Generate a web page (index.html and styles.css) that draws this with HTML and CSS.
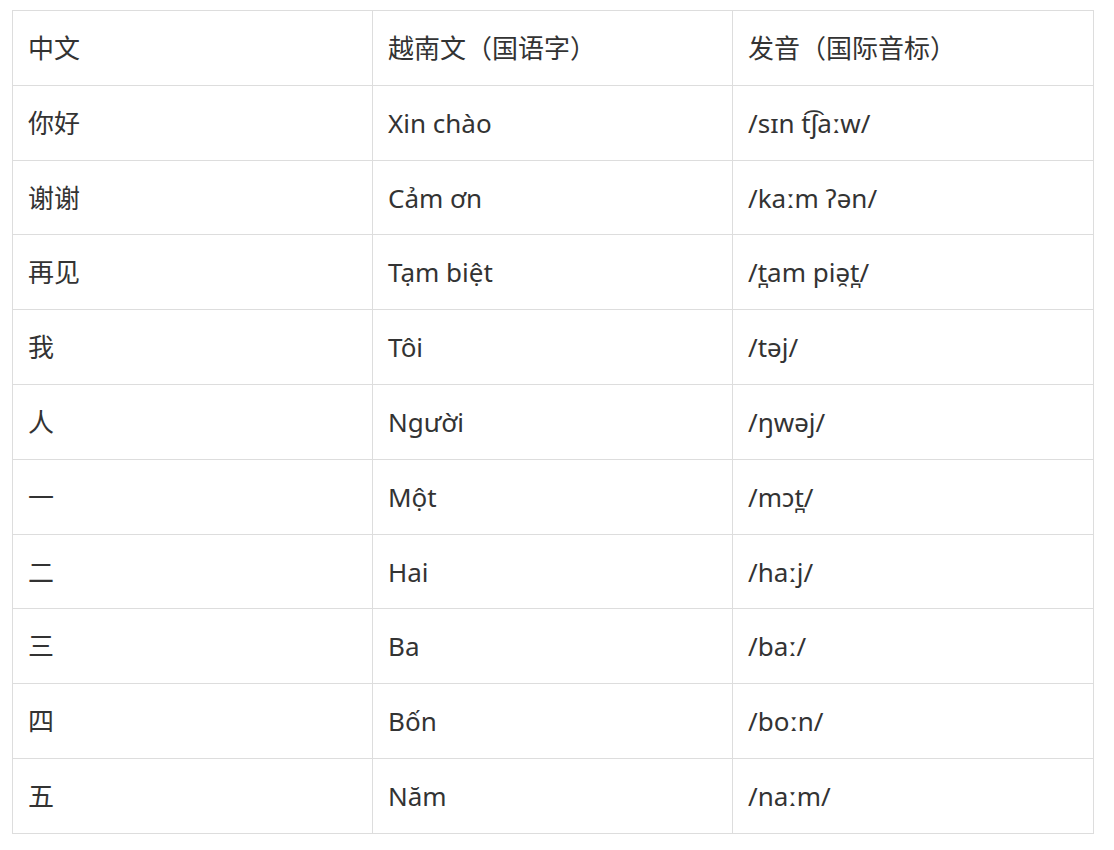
FILE: index.html
```html
<!DOCTYPE html>
<html lang="zh">
<head>
<meta charset="utf-8">
<link rel="stylesheet" href="styles.css">
</head>
<body>
<table class="vocab">
  <colgroup>
    <col class="col-a">
    <col class="col-b">
    <col class="col-c">
  </colgroup>
  <thead>
    <tr><th>中文</th><th>越南文（国语字）</th><th>发音（国际音标）</th></tr>
  </thead>
  <tbody>
    <tr><td>你好</td><td>Xin chào</td><td>/sɪn t͡ʃaːw/</td></tr>
    <tr><td>谢谢</td><td>Cảm ơn</td><td>/kaːm ʔən/</td></tr>
    <tr><td>再见</td><td>Tạm biệt</td><td>/t̪am piə̯t̪/</td></tr>
    <tr><td>我</td><td>Tôi</td><td>/təj/</td></tr>
    <tr><td>人</td><td>Người</td><td>/ŋwəj/</td></tr>
    <tr><td>一</td><td>Một</td><td>/mɔt̪/</td></tr>
    <tr><td>二</td><td>Hai</td><td>/haːj/</td></tr>
    <tr><td>三</td><td>Ba</td><td>/baː/</td></tr>
    <tr><td>四</td><td>Bốn</td><td>/boːn/</td></tr>
    <tr><td>五</td><td>Năm</td><td>/naːm/</td></tr>
  </tbody>
</table>
</body>
</html>
```
FILE: styles.css
```css
html, body {
  margin: 0;
  padding: 0;
  background: #fff;
}
body {
  padding: 10px 20px 0 12px;
  font-family: "Noto Sans", "Noto Sans CJK SC", sans-serif;
  color: #333;
}
.vocab {
  width: 1082px;
  border-collapse: collapse;
  table-layout: fixed;
  font-size: 26px;
}
.col-a,
.col-b {
  width: 360px;
}
.vocab th,
.vocab td {
  border: 1px solid #dddddd;
  padding: 16px 15px 14px;
  height: 43.8px;
  line-height: 43.8px;
  text-align: left;
  font-weight: normal;
  vertical-align: middle;
  box-sizing: content-box;
}
```
